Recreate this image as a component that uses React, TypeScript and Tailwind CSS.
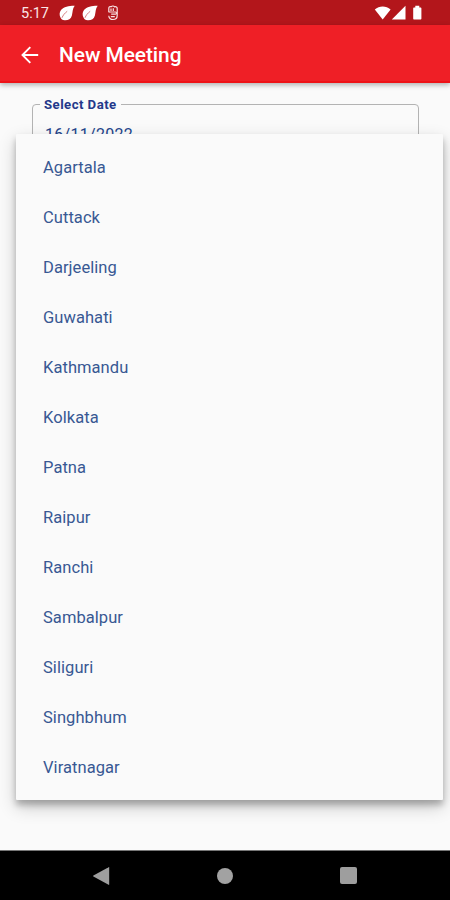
const CITIES = [
  "Agartala",
  "Cuttack",
  "Darjeeling",
  "Guwahati",
  "Kathmandu",
  "Kolkata",
  "Patna",
  "Raipur",
  "Ranchi",
  "Sambalpur",
  "Siliguri",
  "Singhbhum",
  "Viratnagar",
];

function LeafIcon() {
  return (
    <svg width="16" height="16" viewBox="0 0 16 16" fill="none">
      <path d="M15.7.7C10.6.6 4.6 1.5 2 5 .2 7.5.3 10.3 1.5 12.6c.5 1.6 2 2.6 4.2 2.7 3.4.2 6.3-1.5 7.2-4.9C13.7 7.1 13.4 3.600 15.700.7Z" fill="#fff" />
      <path d="M3 12.800C4 10.300 5.700 8.100 8.200 6.300" stroke="#cf7275" strokeWidth="0.9" />
    </svg>
  );
}

function FistIcon() {
  return (
    <svg width="12" height="16" viewBox="0 0 12 16" fill="none" stroke="#f9e2e3" strokeWidth="1.2">
      <path d="M1.800 7.200V3.300C1.800 1.900 3 1.300 4 1.700 5.200.7 6.800.8 7.600 1.800 9 1.400 10.200 2.300 10.200 3.600V10.500C10.200 13 8.600 14.500 6 14.500 3.400 14.500 1.800 13 1.800 10.800" />
      <path d="M4 3.600V6M6.300 3.300V6M1.800 7H8.400C10 7 10 9.200 8.400 9.200H4.200M3.800 11.600H7.800" />
    </svg>
  );
}

function StatusBar() {
  return (
    <div className="flex h-[25px] shrink-0 items-center bg-[#b3161b] text-white">
      <span className="ml-[21px] w-[38px] pt-[3px] text-[14.5px] leading-none text-[#fae6e7]">5:17</span>
      <div className="flex items-center gap-[7px] pt-px">
        <LeafIcon />
        <LeafIcon />
      </div>
      <div className="ml-[9px]">
        <FistIcon />
      </div>
      <svg className="mr-[27px] ml-auto" width="49" height="16" viewBox="0 0 49 16" fill="#fff">
        <path d="M.8 4.6C5.2.5 12.2.5 16.6 4.6L8.7 14.4Z" />
        <path d="M31.5.8v13.7H17.800Z" />
        <path d="M41.3.8h4v1.8h1.1c.6 0 1 .4 1 1v9.900c0 .6-.4 1-1 1h-6.2c-.6 0-1-.4-1-1V3.600c0-.6.4-1 1-1h1.100Z" />
      </svg>
    </div>
  );
}

function AppBar() {
  return (
    <header className="relative z-10 flex h-[58px] shrink-0 items-center border-b-2 border-[#ee1217] bg-[#ef1f26] pt-[4px] pl-[21px] text-white shadow-[0_2px_5px_rgba(0,0,0,0.3)]">
      <svg width="18" height="18" viewBox="0 0 18 18" fill="none" stroke="#fff" strokeWidth="1.9">
        <path d="M17.2 9H2M9.3 1.2 1.5 9l7.8 7.8" />
      </svg>
      <h1 className="ml-[20px] pt-px text-[20.9px] leading-none font-medium tracking-[-0.06px]">New Meeting</h1>
    </header>
  );
}

function DateField() {
  return (
    <fieldset className="mr-[31px] ml-[32px] h-[64px] rounded-[4px] border border-[#b3b3b3] px-[7px]">
      <legend className="px-[4px] text-[13.2px] leading-[15px] font-bold tracking-[0.45px] text-[#23388a]">
        Select Date
      </legend>
      <div className="pt-[13px] pl-[5px] text-[16px] leading-[20px] tracking-[0.3px] text-[#23458c]">16/11/2022</div>
    </fieldset>
  );
}

function CityMenu() {
  return (
    <ul className="absolute top-[51px] right-[7px] left-[16px] h-[666px] rounded-[1px] bg-[#fafafa] pt-[9px] shadow-[0_5px_6px_rgba(0,0,0,0.24),0_7px_18px_rgba(0,0,0,0.2)]">
      {CITIES.map((city) => (
        <li key={city} className="flex h-[50px] items-center pl-[27px] text-[16.5px] tracking-[0.06px] text-[#385893]">
          {city}
        </li>
      ))}
    </ul>
  );
}

function NavigationBar() {
  return (
    <nav className="relative z-10 flex h-[50px] shrink-0 items-center justify-between border-t border-[#777] bg-black pr-[93px] pl-[92px]">
      <svg width="18" height="20" viewBox="0 0 18 20" fill="#9e9e9e">
        <path d="M17.2 1.5v17q0 .6-.6.3L1.4 10.5q-.7-.5 0-1L16.6 1.2q.6-.3.6.3Z" />
      </svg>
      <div className="size-[16px] rounded-full bg-[#a2a2a2]" />
      <div className="size-[17px] rounded-[2px] bg-[#9e9e9e]" />
    </nav>
  );
}

export default function App() {
  return (
    <div className="flex h-[900px] w-[450px] flex-col overflow-hidden bg-[#fafafa] font-[Roboto,sans-serif]">
      <StatusBar />
      <AppBar />
      <main className="relative flex-1 pt-[14px]">
        <DateField />
        <CityMenu />
      </main>
      <NavigationBar />
    </div>
  );
}
